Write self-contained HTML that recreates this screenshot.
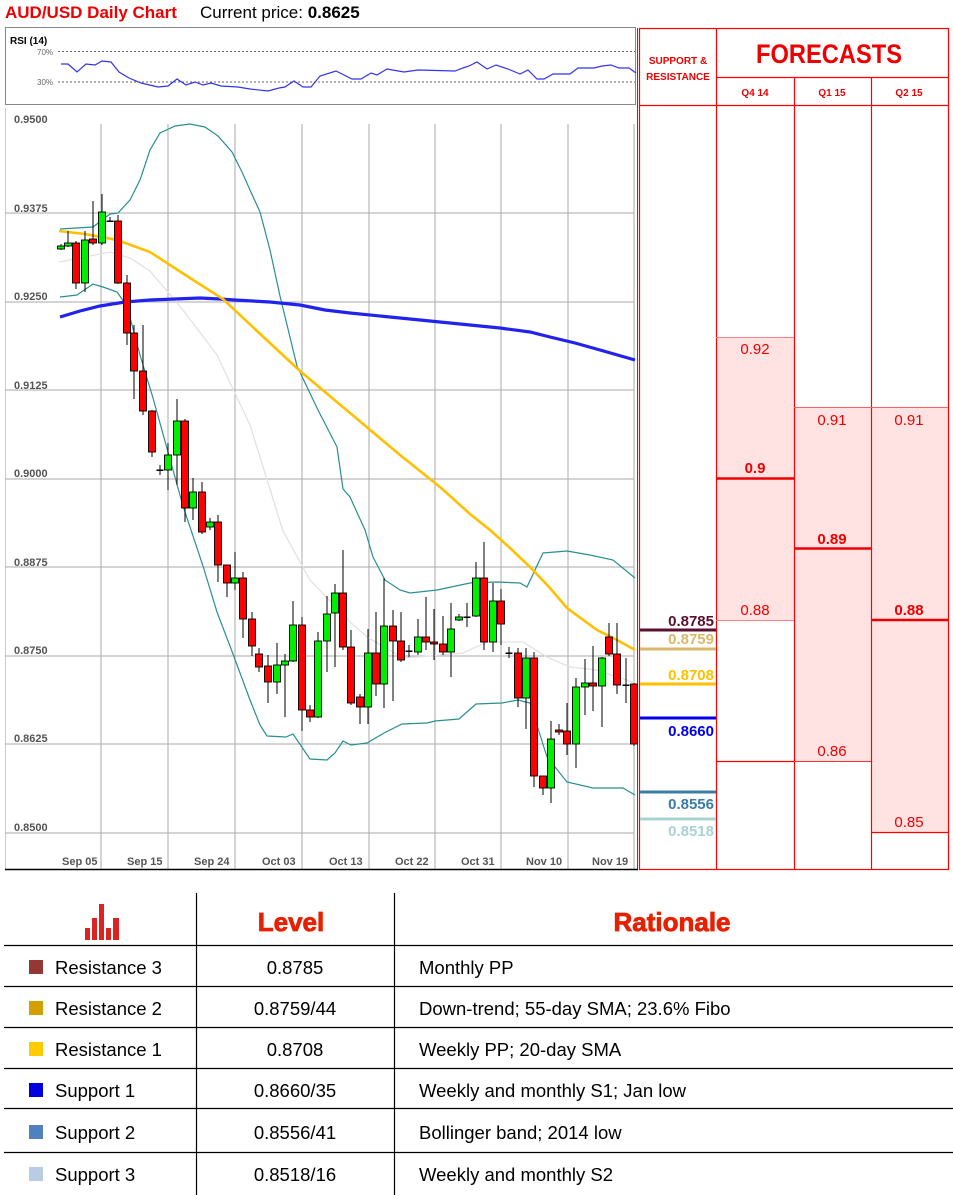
<!DOCTYPE html>
<html><head><meta charset="utf-8"><style>
html,body{margin:0;padding:0;background:#fff;}
svg{display:block;font-family:"Liberation Sans",sans-serif;}
.r{fill:#ff0000;stroke:#000;stroke-width:0.9}
.g{fill:#00ee00;stroke:#000;stroke-width:0.9}
.w line{stroke:#000;stroke-width:1}
.ax{font-size:11px;fill:#555;font-weight:bold}
.tb{font-size:18.5px;fill:#000}
</style></head><body>
<svg width="953" height="1195" viewBox="0 0 953 1195">
<!-- title -->
<text x="5" y="18" font-size="17" font-weight="bold" fill="#ee0000">AUD/USD Daily Chart</text>
<text x="200" y="18" font-size="17" fill="#000">Current price: <tspan font-weight="bold">0.8625</tspan></text>

<!-- RSI -->
<rect x="5.5" y="27.5" width="630" height="77" fill="#fff" stroke="#888"/>
<text x="10" y="44" font-size="10" font-weight="bold">RSI (14)</text>
<text x="37" y="55" font-size="8" fill="#666">70%</text>
<text x="37" y="85" font-size="8" fill="#666">30%</text>
<line x1="58" y1="51.5" x2="635" y2="51.5" stroke="#666" stroke-dasharray="2,2"/>
<line x1="58" y1="82" x2="635" y2="82" stroke="#666" stroke-dasharray="2,2"/>
<polyline fill="none" stroke="#3333ee" stroke-width="1.2" points="61,64 68,64 77,72 86,64 95,65 102,61 111,62 119,72 129,78 141,83 158,87 168,86 177,79 186,85 195,82 203,85 211,83 221,86 238,87 250,89 268,91 279,88 285,87 294,81 303,87 311,87 320,76 336,71 352,79 361,79 371,73 377,75 387,69 404,72 418,70 455,71 463,68 469,66 477,62 487,69 496,65 508,69 520,74 528,70 537,79 544,79 553,74 561,74 570,74 578,68 594,68 602,66 611,65 619,68 629,68 636,73"/>

<!-- price chart frame -->
<line x1="5.5" y1="108" x2="5.5" y2="869" stroke="#ccc"/>
<g stroke="#aaa" stroke-width="1">
<line x1="5" y1="213" x2="634" y2="213"/><line x1="5" y1="302" x2="634" y2="302"/>
<line x1="5" y1="390" x2="634" y2="390"/><line x1="5" y1="479" x2="634" y2="479"/>
<line x1="5" y1="567" x2="634" y2="567"/><line x1="5" y1="656" x2="634" y2="656"/>
<line x1="5" y1="744" x2="634" y2="744"/><line x1="5" y1="833" x2="634" y2="833"/>
<line x1="101" y1="124" x2="101" y2="869"/><line x1="168" y1="124" x2="168" y2="869"/>
<line x1="235" y1="124" x2="235" y2="869"/><line x1="302" y1="124" x2="302" y2="869"/>
<line x1="369" y1="124" x2="369" y2="869"/><line x1="435" y1="124" x2="435" y2="869"/>
<line x1="501" y1="124" x2="501" y2="869"/><line x1="568" y1="124" x2="568" y2="869"/>
<line x1="634" y1="124" x2="634" y2="869"/>
</g>
<line x1="5" y1="869.5" x2="638" y2="869.5" stroke="#000" stroke-width="1.5"/>
<line x1="637.5" y1="28" x2="637.5" y2="869" stroke="#ff0000" stroke-width="1"/>
<g class="ax">
<text x="14" y="123">0.9500</text><text x="14" y="212">0.9375</text><text x="14" y="300">0.9250</text>
<text x="14" y="389">0.9125</text><text x="14" y="477">0.9000</text><text x="14" y="566">0.8875</text>
<text x="14" y="654">0.8750</text><text x="14" y="742">0.8625</text><text x="14" y="831">0.8500</text>
<text x="62" y="865">Sep 05</text><text x="127" y="865">Sep 15</text><text x="194" y="865">Sep 24</text>
<text x="262" y="865">Oct 03</text><text x="329" y="865">Oct 13</text><text x="395" y="865">Oct 22</text>
<text x="461" y="865">Oct 31</text><text x="526" y="865">Nov 10</text><text x="592" y="865">Nov 19</text>
</g>

<!-- indicator lines -->
<polyline fill="none" stroke="#e2e2e2" stroke-width="1.3" points="59,262 80,258 110,252 130,258 150,271 183,310 217,355 250,425 283,531 310,580 350,622 367,637 403,658 430,656 463,653 487,642 523,642 547,657 570,667 597,670 635,683"/>
<polyline fill="none" stroke="#2a8f8f" stroke-width="1.2" points="60,229 93,227 110,214 118,213 130,200 140,180 150,150 160,133 175,126 190,124 205,127 218,136 232,152 242,172 250,190 260,212 270,250 280,296 297,366 317,408 337,447 343,489 350,497 365,530 373,557 385,580 400,590 410,593 437,590 470,583 497,582 520,583 527,587 543,553 567,551 590,555 613,560 635,578"/>
<polyline fill="none" stroke="#2a8f8f" stroke-width="1.2" points="60,297 77,295 93,284 103,287 117,292 127,306 140,355 153,398 183,506 203,566 217,612 233,654 250,700 260,725 267,736 286,737 293,734 310,759 327,760 335,753 343,741 351,745 367,743 384,733 402,724 427,723 435,721 459,719 476,704 502,703 518,700 530,703 547,757 567,782 593,788 623,788 635,795"/>
<polyline fill="none" stroke="#2222ee" stroke-width="3.2" points="60,317 80,311 100,306 125,302 150,300 175,299 200,298 220,299 235,300 270,302 300,305 325,310 350,313 400,318 450,323 500,328 530,332 550,337 575,343 600,350 635,360"/>
<polyline fill="none" stroke="#ffc000" stroke-width="2.6" points="59,231 85,234 117,240 150,252 190,278 223,299 257,331 300,371 350,413 400,455 440,487 470,514 490,530 510,548 530,567 550,588 567,608 597,630 617,640 635,650"/>

<!-- candles -->
<g class="w">
<line x1="61" y1="244" x2="61" y2="250"/><line x1="68" y1="231" x2="68" y2="247"/><line x1="76" y1="241" x2="76" y2="289"/><line x1="85" y1="231" x2="85" y2="292"/><line x1="93" y1="201" x2="93" y2="245"/><line x1="102" y1="194" x2="102" y2="245"/><line x1="110" y1="217" x2="110" y2="222"/><line x1="118" y1="215" x2="118" y2="284"/><line x1="127" y1="275" x2="127" y2="345"/><line x1="134" y1="325" x2="134" y2="399"/><line x1="143" y1="325" x2="143" y2="415"/><line x1="152" y1="410" x2="152" y2="457"/><line x1="160" y1="465" x2="160" y2="475"/><line x1="168" y1="443" x2="168" y2="490"/><line x1="177" y1="399" x2="177" y2="485"/><line x1="185" y1="419" x2="185" y2="522"/><line x1="193" y1="478" x2="193" y2="520"/><line x1="202" y1="482" x2="202" y2="534"/><line x1="210" y1="518" x2="210" y2="530"/><line x1="218" y1="515" x2="218" y2="582"/><line x1="227" y1="565" x2="227" y2="597"/><line x1="235" y1="552" x2="235" y2="590"/><line x1="243" y1="572" x2="243" y2="638"/><line x1="252" y1="612" x2="252" y2="656"/><line x1="259" y1="648" x2="259" y2="672"/><line x1="268" y1="655" x2="268" y2="703"/><line x1="277" y1="643" x2="277" y2="694"/><line x1="285" y1="654" x2="285" y2="717"/><line x1="293" y1="601" x2="293" y2="662"/><line x1="302" y1="617" x2="302" y2="731"/><line x1="310" y1="705" x2="310" y2="722"/><line x1="318" y1="632" x2="318" y2="718"/><line x1="327" y1="596" x2="327" y2="672"/><line x1="335" y1="584" x2="335" y2="667"/><line x1="343" y1="550" x2="343" y2="650"/><line x1="351" y1="630" x2="351" y2="705"/><line x1="360" y1="694" x2="360" y2="724"/><line x1="368" y1="629" x2="368" y2="724"/><line x1="376" y1="612" x2="376" y2="696"/><line x1="384" y1="578" x2="384" y2="708"/><line x1="393" y1="610" x2="393" y2="701"/><line x1="401" y1="612" x2="401" y2="662"/><line x1="409" y1="645" x2="409" y2="657"/><line x1="418" y1="619" x2="418" y2="655"/><line x1="426" y1="597" x2="426" y2="650"/><line x1="434" y1="609" x2="434" y2="660"/><line x1="443" y1="616" x2="443" y2="655"/><line x1="451" y1="603" x2="451" y2="677"/><line x1="459" y1="614" x2="459" y2="621"/><line x1="467" y1="603" x2="467" y2="627"/><line x1="476" y1="562" x2="476" y2="617"/><line x1="484" y1="542" x2="484" y2="650"/><line x1="493" y1="583" x2="493" y2="652"/><line x1="501" y1="589" x2="501" y2="645"/><line x1="509" y1="647" x2="509" y2="658"/><line x1="518" y1="648" x2="518" y2="707"/><line x1="526" y1="648" x2="526" y2="729"/><line x1="534" y1="652" x2="534" y2="787"/><line x1="543" y1="776" x2="543" y2="795"/><line x1="551" y1="721" x2="551" y2="803"/><line x1="559" y1="724" x2="559" y2="735"/><line x1="567" y1="703" x2="567" y2="755"/><line x1="576" y1="678" x2="576" y2="768"/><line x1="585" y1="659" x2="585" y2="715"/><line x1="593" y1="646" x2="593" y2="711"/><line x1="602" y1="657" x2="602" y2="727"/><line x1="609" y1="623" x2="609" y2="656"/><line x1="617" y1="623" x2="617" y2="694"/><line x1="626" y1="658" x2="626" y2="703"/><line x1="634" y1="683" x2="634" y2="746"/>
</g>
<g>
<rect class="g" x="57.5" y="246" width="7" height="3"/><rect class="g" x="64.5" y="243" width="7" height="3"/><rect class="r" x="72.5" y="243" width="7" height="40"/><rect class="g" x="81.5" y="240" width="7" height="43"/><rect class="r" x="89.5" y="239" width="7" height="4"/><rect class="g" x="98.5" y="212" width="7" height="31"/><rect x="106.5" y="220.5" width="7" height="1.5"/><rect class="r" x="114.5" y="221" width="7" height="62"/><rect class="r" x="123.5" y="283" width="7" height="50"/><rect class="r" x="130.5" y="333" width="7" height="38"/><rect class="r" x="139.5" y="371" width="7" height="40"/><rect class="r" x="148.5" y="411" width="7" height="41"/><rect x="156.5" y="469.5" width="7" height="1.5"/><rect class="g" x="164.5" y="455" width="7" height="15"/><rect class="g" x="173.5" y="421" width="7" height="34"/><rect class="r" x="181.5" y="421" width="7" height="87"/><rect class="g" x="189.5" y="492" width="7" height="16"/><rect class="r" x="198.5" y="492" width="7" height="40"/><rect class="g" x="206.5" y="522" width="7" height="5"/><rect class="r" x="214.5" y="522" width="7" height="43"/><rect class="r" x="223.5" y="565" width="7" height="18"/><rect class="g" x="231.5" y="578" width="7" height="5"/><rect class="r" x="239.5" y="578" width="7" height="41"/><rect class="r" x="248.5" y="619" width="7" height="27"/><rect class="r" x="255.5" y="654" width="7" height="13"/><rect class="r" x="264.5" y="666" width="7" height="16"/><rect class="g" x="273.5" y="665" width="7" height="17"/><rect class="g" x="281.5" y="661" width="7" height="4"/><rect class="g" x="289.5" y="625" width="7" height="36"/><rect class="r" x="298.5" y="625" width="7" height="85"/><rect class="r" x="306.5" y="710" width="7" height="7"/><rect class="g" x="314.5" y="641" width="7" height="76"/><rect class="g" x="323.5" y="614" width="7" height="27"/><rect class="g" x="331.5" y="593" width="7" height="20"/><rect class="r" x="339.5" y="593" width="7" height="54"/><rect class="r" x="347.5" y="647" width="7" height="56"/><rect class="r" x="356.5" y="697" width="7" height="10"/><rect class="g" x="364.5" y="653" width="7" height="54"/><rect class="r" x="372.5" y="653" width="7" height="31"/><rect class="g" x="380.5" y="626" width="7" height="58"/><rect class="r" x="389.5" y="626" width="7" height="15"/><rect class="r" x="397.5" y="641" width="7" height="19"/><rect x="405.5" y="650.5" width="7" height="1.5"/><rect class="g" x="414.5" y="637" width="7" height="15"/><rect class="r" x="422.5" y="637" width="7" height="5"/><rect class="r" x="430.5" y="642" width="7" height="2"/><rect class="r" x="439.5" y="644" width="7" height="8"/><rect class="g" x="447.5" y="629" width="7" height="23"/><rect class="g" x="455.5" y="617" width="7" height="3"/><rect x="463.5" y="616.5" width="7" height="1.5"/><rect class="g" x="472.5" y="578" width="7" height="38"/><rect class="r" x="480.5" y="578" width="7" height="64"/><rect class="g" x="489.5" y="601" width="7" height="41"/><rect class="r" x="497.5" y="601" width="7" height="23"/><rect x="505.5" y="652.5" width="7" height="1.5"/><rect class="r" x="514.5" y="653" width="7" height="45"/><rect class="g" x="522.5" y="658" width="7" height="40"/><rect class="r" x="530.5" y="658" width="7" height="118"/><rect class="r" x="539.5" y="776" width="7" height="12"/><rect class="g" x="547.5" y="739" width="7" height="49"/><rect class="r" x="555.5" y="730" width="7" height="2"/><rect class="r" x="563.5" y="731" width="7" height="13"/><rect class="g" x="572.5" y="687" width="7" height="57"/><rect class="g" x="581.5" y="683" width="7" height="4"/><rect class="r" x="589.5" y="683" width="7" height="3"/><rect class="g" x="598.5" y="658" width="7" height="28"/><rect class="r" x="605.5" y="637" width="7" height="17"/><rect class="r" x="613.5" y="654" width="7" height="31"/><rect x="622.5" y="684.5" width="7" height="1.5"/><rect class="r" x="630.5" y="684" width="7" height="60"/>
</g>

<!-- forecast panel -->
<rect x="716" y="337" width="78" height="283" fill="#ffe3e3"/>
<rect x="794" y="407" width="77" height="354" fill="#ffe3e3"/>
<rect x="871" y="407" width="77" height="425" fill="#ffe3e3"/>
<g stroke="#ff0000" stroke-width="1.2" fill="none">
<rect x="639.5" y="28.5" width="309" height="841"/>
<line x1="716.5" y1="28" x2="716.5" y2="869"/>
<line x1="794.5" y1="77" x2="794.5" y2="869"/>
<line x1="871.5" y1="77" x2="871.5" y2="869"/>
<line x1="716" y1="77.5" x2="948" y2="77.5"/>
<line x1="639" y1="105.5" x2="948" y2="105.5"/>
<line x1="716" y1="761.5" x2="794" y2="761.5" stroke="#ff0000"/>
<line x1="871" y1="832.5" x2="948" y2="832.5"/>
</g>
<line x1="716" y1="337.5" x2="794" y2="337.5" stroke="#ff8080"/>
<line x1="716" y1="620.5" x2="794" y2="620.5" stroke="#ff8080"/>
<line x1="794" y1="407.5" x2="948" y2="407.5" stroke="#ff6060"/>
<line x1="794" y1="761.5" x2="871" y2="761.5" stroke="#ff3030"/>
<line x1="716" y1="478.5" x2="794" y2="478.5" stroke="#ee0000" stroke-width="2.5"/>
<line x1="794" y1="548.5" x2="871" y2="548.5" stroke="#ee0000" stroke-width="2.5"/>
<line x1="871" y1="620" x2="948" y2="620" stroke="#ee0000" stroke-width="2.5"/>
<g fill="#ee0000" text-anchor="middle">
<text x="678" y="64" font-size="10" font-weight="bold">SUPPORT &amp;</text>
<text x="678" y="80" font-size="10" font-weight="bold">RESISTANCE</text>
<text x="829" y="63" font-size="27" font-weight="bold" textLength="146" lengthAdjust="spacingAndGlyphs">FORECASTS</text>
<text x="755" y="96" font-size="10" font-weight="bold">Q4 14</text>
<text x="832" y="96" font-size="10" font-weight="bold">Q1 15</text>
<text x="909" y="96" font-size="10" font-weight="bold">Q2 15</text>
<g font-size="15">
<text x="755" y="354">0.92</text><text x="755" y="615">0.88</text>
<text x="832" y="425">0.91</text><text x="832" y="756">0.86</text>
<text x="909" y="425">0.91</text><text x="909" y="827">0.85</text>
</g>
<g font-size="15" font-weight="bold">
<text x="755" y="473">0.9</text><text x="832" y="544">0.89</text><text x="909" y="615">0.88</text>
</g>
</g>
<!-- S&R lines -->
<g stroke-width="3">
<line x1="640" y1="630" x2="716" y2="630" stroke="#5c0f2e"/>
<line x1="640" y1="649" x2="716" y2="649" stroke="#d9b86a"/>
<line x1="640" y1="684" x2="716" y2="684" stroke="#ffc000"/>
<line x1="640" y1="718" x2="716" y2="718" stroke="#0000ee"/>
<line x1="640" y1="792" x2="716" y2="792" stroke="#3a7ca5"/>
<line x1="640" y1="819" x2="716" y2="819" stroke="#a9d3d3"/>
</g>
<g font-size="15" font-weight="bold" text-anchor="end">
<text x="714" y="626" fill="#5c0f2e">0.8785</text>
<text x="714" y="644" fill="#d9b86a">0.8759</text>
<text x="714" y="680" fill="#ffc000">0.8708</text>
<text x="714" y="736" fill="#0000ee">0.8660</text>
<text x="714" y="809" fill="#3a7ca5">0.8556</text>
<text x="714" y="836" fill="#a9d3d3">0.8518</text>
</g>

<!-- table -->
<g stroke="#000" stroke-width="1.2">
<line x1="196.5" y1="893" x2="196.5" y2="1195"/>
<line x1="394.5" y1="893" x2="394.5" y2="1195"/>
<line x1="4" y1="945.5" x2="953" y2="945.5"/>
<line x1="4" y1="986.5" x2="953" y2="986.5"/>
<line x1="4" y1="1027.5" x2="953" y2="1027.5"/>
<line x1="4" y1="1068.5" x2="953" y2="1068.5"/>
<line x1="4" y1="1108.5" x2="953" y2="1108.5"/>
<line x1="4" y1="1152.5" x2="953" y2="1152.5"/>
</g>
<g fill="#dd2222">
<rect x="85" y="928" width="5" height="12"/><rect x="92" y="918" width="5" height="22"/><rect x="99" y="904" width="5" height="36"/><rect x="106" y="928" width="5" height="12"/><rect x="113" y="918" width="6" height="22"/>
</g>
<text x="291" y="931" font-size="26" font-weight="bold" fill="#e62000" text-anchor="middle" stroke="#e62000" stroke-width="0.8">Level</text>
<text x="672" y="931" font-size="26" font-weight="bold" fill="#e62000" text-anchor="middle" stroke="#e62000" stroke-width="0.8">Rationale</text>
<rect x="29" y="960" width="14" height="14" fill="#953735"/>
<rect x="29" y="1001" width="14" height="14" fill="#d4a000"/>
<rect x="29" y="1042" width="14" height="14" fill="#ffcc00"/>
<rect x="29" y="1083" width="14" height="14" fill="#0000dd"/>
<rect x="29" y="1125" width="14" height="14" fill="#4f81bd"/>
<rect x="29" y="1167" width="14" height="14" fill="#b8cce4"/>
<g class="tb">
<text x="55" y="974">Resistance 3</text><text x="55" y="1015">Resistance 2</text><text x="55" y="1056">Resistance 1</text>
<text x="55" y="1097">Support 1</text><text x="55" y="1139">Support 2</text><text x="55" y="1181">Support 3</text>
<g text-anchor="middle">
<text x="295" y="974">0.8785</text><text x="295" y="1015">0.8759/44</text><text x="295" y="1056">0.8708</text>
<text x="295" y="1097">0.8660/35</text><text x="295" y="1139">0.8556/41</text><text x="295" y="1181">0.8518/16</text>
</g>
<text x="419" y="974">Monthly PP</text>
<text x="419" y="1015">Down-trend; 55-day SMA; 23.6% Fibo</text>
<text x="419" y="1056">Weekly PP; 20-day SMA</text>
<text x="419" y="1097">Weekly and monthly S1; Jan low</text>
<text x="419" y="1139">Bollinger band; 2014 low</text>
<text x="419" y="1181">Weekly and monthly S2</text>
</g>
</svg>
</body></html>
